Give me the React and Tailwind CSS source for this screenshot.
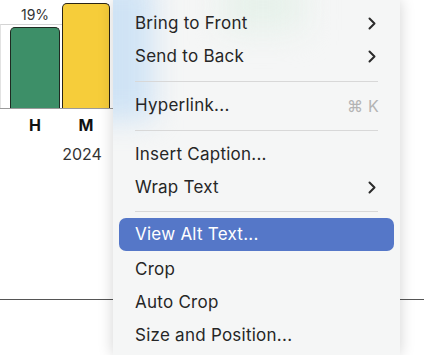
import React from "react";

function Chevron() {
  return (
    <svg width="8" height="13" viewBox="0 0 8 13" className="mr-[3px]">
      <polyline points="1.5,1.5 6.5,6.5 1.5,11.5" fill="none" stroke="#2b2b2b" strokeWidth="2" strokeLinecap="round" strokeLinejoin="round" />
    </svg>
  );
}

function Item({ label, sub, shortcut, active }) {
  return (
    <div
      className={`h-[33px] mx-[6px] pl-[16px] pr-[15px] flex items-center justify-between rounded-[7px] ${
        active ? "bg-[#5577c8] text-white" : "text-[#262626]"
      }`}
    >
      <span>{label}</span>
      {sub && <Chevron />}
      {shortcut && <span className="text-[#b4b4b4] text-[16px]">{shortcut}</span>}
    </div>
  );
}

function Sep({ tight }) {
  return (
    <div className={`${tight ? "h-[14px]" : "h-[16px]"} flex items-center px-[22px]`}>
      <div className="h-px w-full bg-[#d8d8d8]" />
    </div>
  );
}

export default function App() {
  return (
    <div className="relative w-[424px] h-[355px] bg-white overflow-hidden font-['Inter','DejaVu_Sans',sans-serif]">
      {/* chart */}
      <div className="flex flex-col w-[113px] h-[170px]">
        <div className="relative flex items-end gap-[2px] pl-[10px] pt-[3px] h-[109px] border-b border-[#9a9a9a]">
          <div className="absolute left-0 top-[24px] w-[62px] h-[84px] border-t border-l border-t-[#d4d4d4] border-l-[#e2e2e2]" />
          <div className="relative flex flex-col items-center w-[50px]">
            <span className="text-[14px] leading-[20px] text-[#333] mb-[2px]">19%</span>
            <div className="w-full h-[81px] bg-[#3d8f68] border border-b-0 border-[#1f2a22] rounded-t-[5px]" />
          </div>
          <div className="relative w-[48px] h-[105px] bg-[#f6cd3a] border border-b-0 border-[#2a2416] rounded-t-[5px]" />
        </div>
        <div className="flex gap-[2px] pl-[10px] pt-[6px] font-bold text-[16px] leading-[20px] text-[#111]">
          <span className="w-[50px] text-center">H</span>
          <span className="w-[48px] text-center">M</span>
        </div>
        <div className="pl-[52px] pt-[9px] w-[112px] text-center text-[16px] leading-[20px] text-[#333]">2024</div>
      </div>
      <div className="mt-[129px] h-px w-full bg-[#555]" />

      {/* context menu */}
      <div className="absolute left-[113px] top-0 w-[287px] h-[355px] bg-[#f5f6f6] shadow-[0_0_14px_rgba(0,0,0,0.18)] overflow-hidden text-[17px] tracking-[0.25px]">
        <div className="absolute -left-[30px] -top-[20px] w-[70px] h-[140px] bg-[#cfe3f5] blur-[14px]" />
        <div className="absolute left-[110px] -top-[20px] w-[80px] h-[50px] bg-[#e6f1ea] blur-[16px]" />
        <div className="relative pt-[7px]">
          <Item label="Bring to Front" sub />
          <Item label="Send to Back" sub />
          <Sep />
          <Item label="Hyperlink..." shortcut="⌘ K" />
          <Sep />
          <Item label="Insert Caption..." />
          <Item label="Wrap Text" sub />
          <Sep tight />
          <Item label="View Alt Text..." active />
          <div className="pt-[2px]">
            <Item label="Crop" />
            <Item label="Auto Crop" />
            <Item label="Size and Position..." />
          </div>
        </div>
      </div>
    </div>
  );
}
